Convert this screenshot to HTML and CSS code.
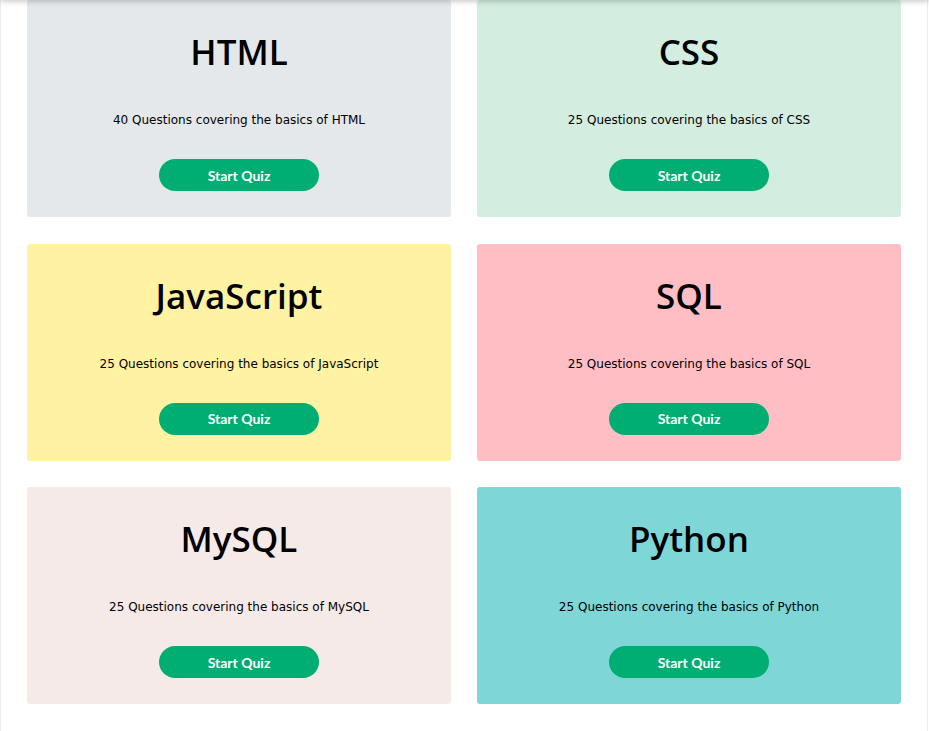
FILE: index.html
```html
<!DOCTYPE html>
<html lang="en">
<head>
  <meta charset="UTF-8" />
  <meta name="viewport" content="width=device-width, initial-scale=1.0" />
  <title>Quizzes</title>
  <link rel="stylesheet" href="styles.css">
</head>
<body>

  <div class="topbar"></div>

  <main class="page">
    <div class="quiz-grid">

      <div class="quiz-card html">
        <h2>HTML</h2>
        <p>40 Questions covering the basics of HTML</p>
        <button>Start Quiz</button>
      </div>

      <div class="quiz-card css">
        <h2>CSS</h2>
        <p>25 Questions covering the basics of CSS</p>
        <button>Start Quiz</button>
      </div>

      <div class="quiz-card js">
        <h2>JavaScript</h2>
        <p>25 Questions covering the basics of JavaScript</p>
        <button>Start Quiz</button>
      </div>

      <div class="quiz-card sql">
        <h2>SQL</h2>
        <p>25 Questions covering the basics of SQL</p>
        <button>Start Quiz</button>
      </div>

      <div class="quiz-card mysql">
        <h2>MySQL</h2>
        <p>25 Questions covering the basics of MySQL</p>
        <button>Start Quiz</button>
      </div>

      <div class="quiz-card python">
        <h2>Python</h2>
        <p>25 Questions covering the basics of Python</p>
        <button>Start Quiz</button>
      </div>

      <div class="quiz-card css">
        <h2>React</h2>
        <p>25 Questions covering the basics of React</p>
        <button>Start Quiz</button>
      </div>

      <div class="quiz-card mysql">
        <h2>PHP</h2>
        <p>25 Questions covering the basics of PHP</p>
        <button>Start Quiz</button>
      </div>

    </div>
  </main>

</body>
</html>
```

FILE: styles.css
```css
body {
  margin: 0;
  background: #fff;
  color: #000;
  font-family: 'DejaVu Sans', sans-serif;
}
.topbar {
  position: fixed;
  top: -40px;
  left: 0;
  right: 0;
  height: 40px;
  background: #fff;
  box-shadow: 0 1px 6px rgba(0, 0, 0, 0.25);
  z-index: 10;
}
.page {
  width: 926px;
  border-left: 1px solid #ececec;
  border-right: 1px solid #ececec;
  min-height: 100vh;
}
.quiz-grid {
  display: grid;
  grid-template-columns: 424px 424px;
  column-gap: 26px;
  row-gap: 26.67px;
  padding: 0 26px;
}
.quiz-card {
  height: 217px;
  box-sizing: border-box;
  padding-top: 28px;
  border-radius: 3px;
  display: flex;
  flex-direction: column;
  align-items: center;
}
.quiz-card h2 {
  font-family: 'Open Sans', sans-serif;
  font-weight: 600;
  font-stretch: 88%;
  font-size: 35px;
  line-height: 48px;
  margin: 0;
}
.quiz-card p {
  font-size: 12px;
  line-height: 16px;
  margin: 36px 0 0;
}
.quiz-card button {
  margin-top: 31px;
  width: 160px;
  height: 32px;
  border: none;
  border-radius: 16px;
  background: #00ae73;
  color: #fff;
  font-family: 'Lato', sans-serif;
  font-weight: 700;
  font-size: 14px;
  cursor: pointer;
}
.quiz-card button:hover {
  background: #009a66;
}
.html { background: #e4e8eb; }
.css { background: #d3eee0; }
.js { background: #fff2a2; }
.sql { background: #ffbec4; }
.mysql { background: #f5eae8; }
.python { background: #7fd6d7; }
```
